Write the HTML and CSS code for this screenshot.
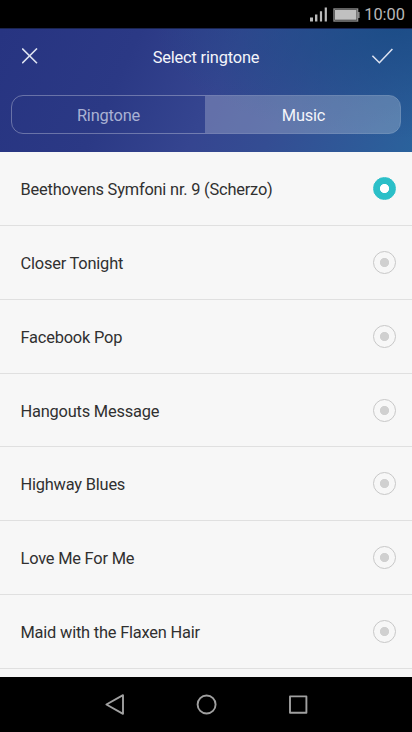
FILE: index.html
```html
<!DOCTYPE html>
<html lang="en">
<head>
  <meta charset="UTF-8" />
  <meta name="viewport" content="width=device-width, initial-scale=1.0" />
  <title>Select ringtone</title>
  <link rel="stylesheet" href="styles.css">
</head>
<body>
  <div class="phone">
    <div class="status-bar">
      <svg class="signal" width="18" height="16" viewBox="0 0 18 16">
        <path d="M0 11.5h3v4H0zM5 8.5h2.4v7H5zM9.9 5.2h2.2v10.3H9.9zM14.7 1.5h2.2v14h-2.2z" />
      </svg>
      <svg class="battery" width="27" height="14" viewBox="0 0 27 14">
        <rect x="1" y="1" width="23.6" height="12" class="battery-shell" />
        <rect x="2" y="2" width="21.6" height="9.8" class="battery-fill" />
        <rect x="25" y="4" width="1.6" height="6" class="battery-tip" />
      </svg>
      <span class="time">10:00</span>
    </div>

    <div class="header">
      <div class="title-bar">
        <button class="icon-btn" aria-label="Cancel">
          <svg width="16" height="16" viewBox="0 0 16 16"><path d="M0.2 0.5l14.8 14.8M15 0.5L0.2 15.3" /></svg>
        </button>
        <h1>Select ringtone</h1>
        <button class="icon-btn" aria-label="Done">
          <svg width="22" height="16" viewBox="0 0 22 16"><path d="M1.4 7.7l7 7L21.4 1" /></svg>
        </button>
      </div>
      <div class="tabs">
        <button class="tab">Ringtone</button>
        <button class="tab active">Music</button>
      </div>
    </div>

    <div class="list">
      <div class="row"><span>Beethovens Symfoni nr. 9 (Scherzo)</span><i class="radio checked"></i></div>
      <div class="row"><span>Closer Tonight</span><i class="radio"></i></div>
      <div class="row"><span>Facebook Pop</span><i class="radio"></i></div>
      <div class="row"><span>Hangouts Message</span><i class="radio"></i></div>
      <div class="row"><span>Highway Blues</span><i class="radio"></i></div>
      <div class="row"><span>Love Me For Me</span><i class="radio"></i></div>
      <div class="row"><span>Maid with the Flaxen Hair</span><i class="radio"></i></div>
    </div>

    <div class="nav-bar">
      <svg width="20" height="22" viewBox="0 0 20 22"><path d="M19 1.2v18.6L2.4 10.5z" /></svg>
      <svg width="20" height="22" viewBox="0 0 20 22"><circle cx="10.6" cy="10.5" r="9" /></svg>
      <svg width="20" height="22" viewBox="0 0 20 22"><rect x="2" y="2.4" width="16.4" height="16.4" /></svg>
    </div>
  </div>
</body>
</html>
```

FILE: styles.css
```css
* {
  box-sizing: border-box;
}

body {
  margin: 0;
  font-family: Roboto, "Liberation Sans", sans-serif;
  background-color: #000;
}

.phone {
  width: 412px;
  height: 732px;
  display: flex;
  flex-direction: column;
  overflow: hidden;
}

button {
  padding: 0;
  border: none;
  background: none;
  font-family: inherit;
  cursor: pointer;
}

.status-bar {
  height: 28px;
  flex: none;
  display: flex;
  justify-content: flex-end;
  align-items: center;
  padding: 1px 7px 0 0;
  background-color: #000;
  color: #b8b8b8;
}

.signal {
  fill: #bababa;
  margin-right: 5px;
  margin-bottom: 1px;
}

.battery {
  margin-right: 4px;
}

.battery-shell {
  fill: none;
  stroke: #8c8c8c;
  stroke-width: 1.4;
}

.battery-fill {
  fill: #c0c0c0;
}

.battery-tip {
  fill: #8c8c8c;
}

.time {
  font-size: 16.4px;
  line-height: 20px;
  margin-top: 1px;
}

.header {
  height: 124px;
  flex: none;
  border-top: 1px solid #1a2450;
  background:
    radial-gradient(ellipse 240px 110px at 96% 0, rgba(27, 76, 134, 0.9), rgba(27, 76, 134, 0)),
    linear-gradient(115deg, #273481 0%, #2b3985 30%, #354590 52%, #344d93 68%, #2a629c 100%);
}

.title-bar {
  height: 55px;
  display: flex;
  align-items: center;
  justify-content: space-between;
  padding: 0 19px 0 22px;
}

.title-bar h1 {
  margin: 0;
  padding: 1px 0 0 3px;
  font-size: 16.4px;
  font-weight: 400;
  letter-spacing: -0.17px;
  color: #f4f5fa;
}

.icon-btn {
  display: flex;
  padding-bottom: 2px;
}

.icon-btn svg {
  fill: none;
  stroke: #dde2f0;
  stroke-width: 1.6;
}

.tabs {
  display: flex;
  height: 39px;
  margin: 11px 11px 0;
  border: 1px solid rgba(255, 255, 255, 0.3);
  border-radius: 12px;
  overflow: hidden;
}

.tab {
  width: 193px;
  padding-top: 1px;
  font-size: 16.4px;
  letter-spacing: -0.2px;
  color: #a9b1d3;
}

.tab.active {
  flex: 1;
  padding-left: 2px;
  background-color: rgba(255, 255, 255, 0.23);
  color: #f4f5fa;
}

.list {
  flex: 1;
  padding-top: 0.15px;
  overflow: hidden;
  background-color: #f7f7f7;
}

.row {
  height: 73.83px;
  display: flex;
  align-items: center;
  justify-content: space-between;
  padding: 0 16px 0 20.5px;
  border-bottom: 1px solid #e0e0e0;
  font-size: 16.4px;
  letter-spacing: -0.2px;
  color: #303030;
}

.row span {
  padding-top: 2px;
}

.radio {
  width: 23px;
  height: 23px;
  border: 1px solid #c8c8c8;
  border-radius: 50%;
  background: radial-gradient(circle, #d0d0d0 4.2px, transparent 5px);
}

.radio.checked {
  border-color: #2bbfc8;
  background: radial-gradient(circle, #fff 4.2px, #2bbfc8 5px);
}

.nav-bar {
  height: 55px;
  flex: none;
  display: flex;
  justify-content: center;
  align-items: center;
  gap: 72px;
  background-color: #000;
}

.nav-bar svg {
  fill: none;
  stroke: #a0a0a0;
  stroke-width: 1.9;
  stroke-linejoin: round;
  overflow: visible;
}
```
